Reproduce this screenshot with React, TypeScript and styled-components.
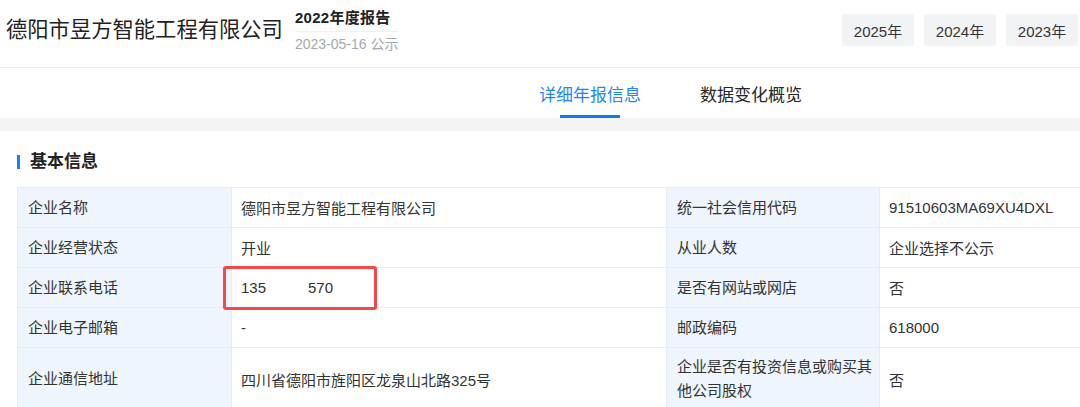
import React from "react";
import styled, { createGlobalStyle } from "styled-components";

const GlobalStyle = createGlobalStyle`
	html, body {
		margin: 0;
		padding: 0;
		background: #fff;
		font-family: "Liberation Sans", "Noto Sans CJK SC", sans-serif;
		color: #333;
	}
	body {
		width: 1080px;
		height: 407px;
		overflow: hidden;
	}
`;

const Page = styled.div`
	width: 1080px;
	overflow: hidden;
`;

const TopBar = styled.header`
	height: 67px;
	display: flex;
	align-items: center;
	justify-content: space-between;
	padding-left: 6px;
	border-bottom: 1px solid #eceef1;
`;

const TitleGroup = styled.div`
	display: flex;
	align-items: center;
	gap: 12px;
`;

const CompanyName = styled.h1`
	margin: 0;
	font-size: 21.3px;
	font-weight: 400;
	color: #222;
	line-height: 1;
	margin-top: -6px;
`;

const ReportMeta = styled.div`
	display: flex;
	flex-direction: column;
	margin-top: -6px;
`;

const ReportTitle = styled.div`
	font-size: 15px;
	font-weight: 700;
	color: #222;
	letter-spacing: 0.3px;
	line-height: 20px;
	padding-bottom: 3px;
	border-bottom: 1px solid #eef0f3;
`;

const ReportDate = styled.div`
	font-size: 14px;
	color: #a3a8b0;
	line-height: 18px;
	margin-top: 3px;
`;

const YearList = styled.div`
	display: flex;
	gap: 10px;
	margin-top: -7px;
	margin-right: 2px;
`;

const YearButton = styled.button`
	height: 32px;
	width: 72px;
	border: none;
	border-radius: 3px;
	background: #f2f3f5;
	font-family: inherit;
	font-size: 15px;
	color: #333;
	padding: 0;
	cursor: pointer;
`;

const Tabs = styled.nav`
	height: 50px;
	display: flex;
	gap: 59px;
	padding-left: 539px;
`;

const Tab = styled.div<{ $active?: boolean }>`
	position: relative;
	height: 50px;
	display: flex;
	align-items: center;
	font-size: 17px;
	color: ${(p) => (p.$active ? "#1f86f2" : "#262626")};

	&::after {
		content: "";
		display: ${(p) => (p.$active ? "block" : "none")};
		position: absolute;
		left: 50%;
		bottom: 0;
		width: 60px;
		height: 3px;
		margin-left: -30px;
		background: #0a7cf0;
	}
`;

const Band = styled.div`
	height: 13px;
	background: #f4f4f5;
`;

const Section = styled.section`
	padding: 21px 0 0 17px;
`;

const SectionTitle = styled.h2`
	margin: 0 0 15px;
	display: flex;
	align-items: center;
	gap: 10px;
	font-size: 17px;
	font-weight: 700;
	color: #222;
	line-height: 20px;

	&::before {
		content: "";
		width: 3px;
		height: 14px;
		background: #1684f5;
	}
`;

const Table = styled.table`
	border-collapse: collapse;
	table-layout: fixed;
	width: 1110px;
	font-size: 15px;
`;

const Label = styled.td`
	background: #eef5fc;
	border: 1px solid #e4ecf5;
	padding: 0 3px 0 10px;
	height: 39px;
	line-height: 24px;
	color: #333;
	vertical-align: middle;
`;

const TallLabel = styled(Label)`
	padding-top: 7px;
	padding-bottom: 7px;
	height: auto;
`;

const Value = styled.td`
	position: relative;
	border: 1px solid #e8eef5;
	padding: 0 9px;
	height: 39px;
	color: #333;
	vertical-align: middle;
`;

const Highlight = styled.div`
	position: absolute;
	left: -9px;
	top: -2px;
	width: 154px;
	height: 44px;
	box-sizing: border-box;
	border: 3px solid #f4474a;
	border-radius: 3px;
	pointer-events: none;
`;

const MaskGap = styled.span`
	display: inline-block;
	width: 42px;
`;

export default function App() {
	return (
		<Page>
			<GlobalStyle />
			<TopBar>
				<TitleGroup>
					<CompanyName>德阳市昱方智能工程有限公司</CompanyName>
					<ReportMeta>
						<ReportTitle>2022年度报告</ReportTitle>
						<ReportDate>2023-05-16 公示</ReportDate>
					</ReportMeta>
				</TitleGroup>
				<YearList>
					<YearButton>2025年</YearButton>
					<YearButton>2024年</YearButton>
					<YearButton>2023年</YearButton>
				</YearList>
			</TopBar>

			<Tabs>
				<Tab $active>详细年报信息</Tab>
				<Tab>数据变化概览</Tab>
			</Tabs>
			<Band />

			<Section>
				<SectionTitle>基本信息</SectionTitle>
				<Table>
					<colgroup>
						<col style={{ width: 214 }} />
						<col style={{ width: 435 }} />
						<col style={{ width: 213 }} />
						<col />
					</colgroup>
					<tbody>
						<tr>
							<Label>企业名称</Label>
							<Value>德阳市昱方智能工程有限公司</Value>
							<Label>统一社会信用代码</Label>
							<Value>91510603MA69XU4DXL</Value>
						</tr>
						<tr>
							<Label>企业经营状态</Label>
							<Value>开业</Value>
							<Label>从业人数</Label>
							<Value>企业选择不公示</Value>
						</tr>
						<tr>
							<Label>企业联系电话</Label>
							<Value>
								135
								<MaskGap />
								570
								<Highlight />
							</Value>
							<Label>是否有网站或网店</Label>
							<Value>否</Value>
						</tr>
						<tr>
							<Label>企业电子邮箱</Label>
							<Value>-</Value>
							<Label>邮政编码</Label>
							<Value>618000</Value>
						</tr>
						<tr>
							<Label>企业通信地址</Label>
							<Value>四川省德阳市旌阳区龙泉山北路325号</Value>
							<TallLabel>企业是否有投资信息或购买其他公司股权</TallLabel>
							<Value>否</Value>
						</tr>
					</tbody>
				</Table>
			</Section>
		</Page>
	);
}
